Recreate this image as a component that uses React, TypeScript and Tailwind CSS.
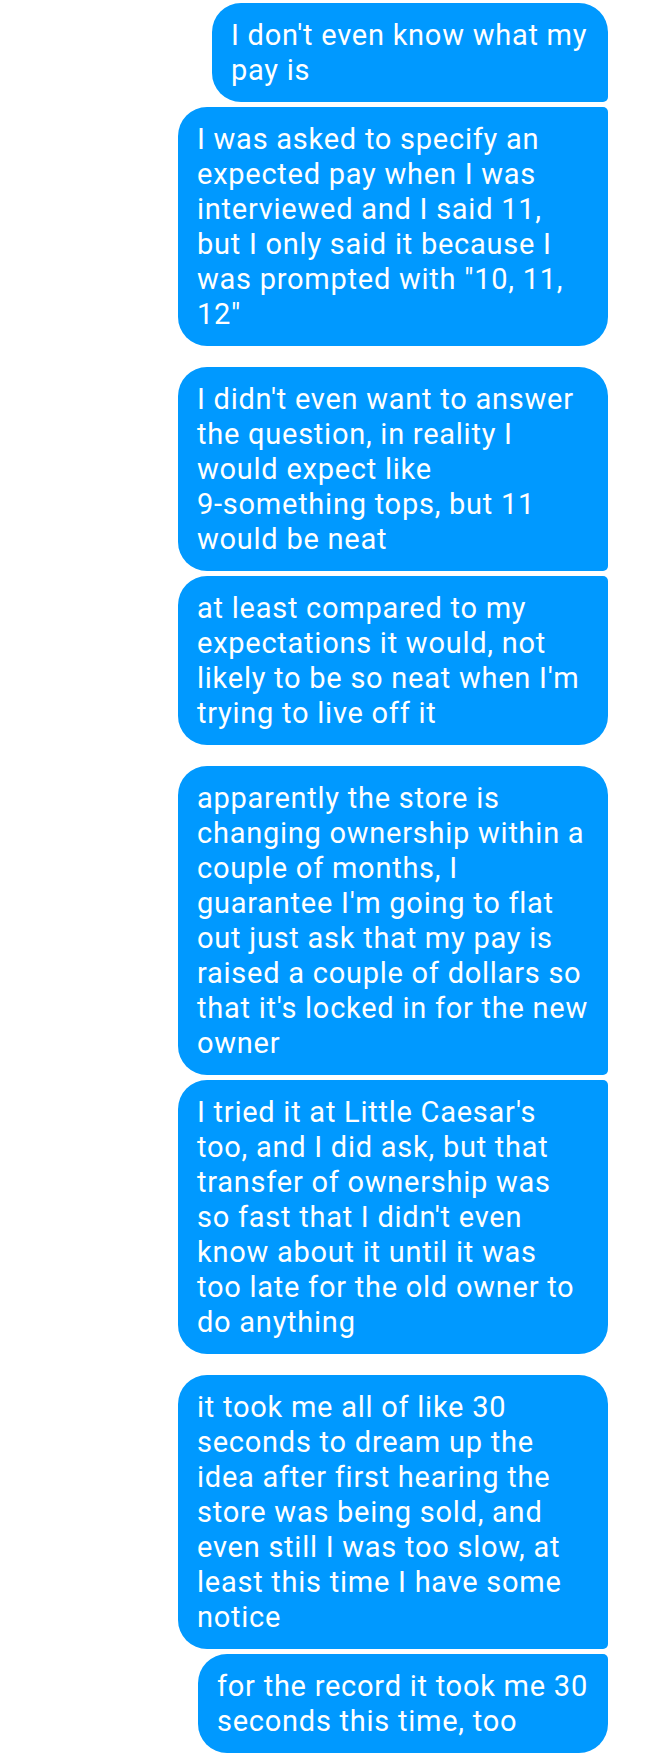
const groups: { width: string; lines: string[] }[][] = [
  [
    { width: "w-[396px]", lines: ["I don't even know what my", "pay is"] },
    {
      width: "w-[430px]",
      lines: [
        "I was asked to specify an",
        "expected pay when I was",
        "interviewed and I said 11,",
        "but I only said it because I",
        'was prompted with "10, 11,',
        '12"',
      ],
    },
  ],
  [
    {
      width: "w-[430px]",
      lines: [
        "I didn't even want to answer",
        "the question, in reality I",
        "would expect like",
        "9-something tops, but 11",
        "would be neat",
      ],
    },
    {
      width: "w-[430px]",
      lines: [
        "at least compared to my",
        "expectations it would, not",
        "likely to be so neat when I'm",
        "trying to live off it",
      ],
    },
  ],
  [
    {
      width: "w-[430px]",
      lines: [
        "apparently the store is",
        "changing ownership within a",
        "couple of months, I",
        "guarantee I'm going to flat",
        "out just ask that my pay is",
        "raised a couple of dollars so",
        "that it's locked in for the new",
        "owner",
      ],
    },
    {
      width: "w-[430px]",
      lines: [
        "I tried it at Little Caesar's",
        "too, and I did ask, but that",
        "transfer of ownership was",
        "so fast that I didn't even",
        "know about it until it was",
        "too late for the old owner to",
        "do anything",
      ],
    },
  ],
  [
    {
      width: "w-[430px]",
      lines: [
        "it took me all of like 30",
        "seconds to dream up the",
        "idea after first hearing the",
        "store was being sold, and",
        "even still I was too slow, at",
        "least this time I have some",
        "notice",
      ],
    },
    {
      width: "w-[410px]",
      lines: ["for the record it took me 30", "seconds this time, too"],
    },
  ],
];

const App = () => {
  return (
    <div className="w-[648px] min-h-[1758px] bg-white pt-[3px] pr-[40px] flex flex-col items-end gap-[21px] font-['Roboto','Noto_Sans',sans-serif]">
      {groups.map((group, gi) => (
        <div key={gi} className="flex flex-col items-end gap-[5px]">
          {group.map((msg, mi) => (
            <div
              key={mi}
              className={`${msg.width} bg-[#0099ff] text-white text-[29px] leading-[35px] tracking-[0.75px] pl-[19px] pt-[15px] pb-[14px] whitespace-nowrap rounded-[29px] ${
                mi === 0 ? "rounded-br-[5px]" : "rounded-tr-[5px]"
              }`}
            >
              {msg.lines.map((line, li) => (
                <div key={li}>{line}</div>
              ))}
            </div>
          ))}
        </div>
      ))}
    </div>
  );
};

export default App;
